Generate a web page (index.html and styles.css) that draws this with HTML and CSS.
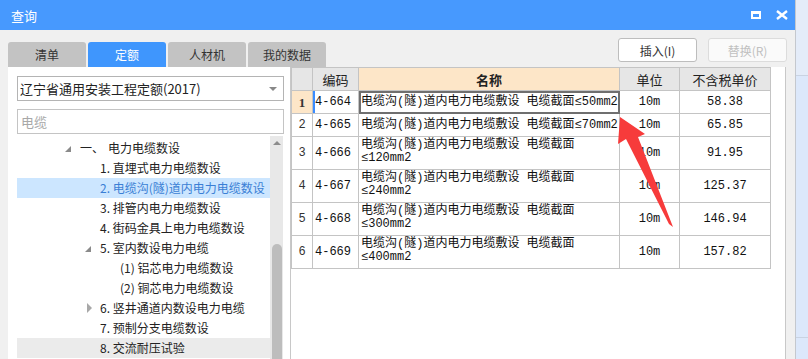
FILE: index.html
```html
<!DOCTYPE html>
<html lang="zh-CN">
<head>
    <meta charset="UTF-8">
    <title>查询</title>
    <link rel="stylesheet" href="styles.css">
</head>
<body>

    <div class="dialog">
        <div class="titlebar">
            <span class="title">查询</span>
            <span class="win-btn max"></span>
            <svg class="win-btn close" width="12" height="10" viewBox="0 0 12 10">
                <path d="M1 1 L11 9 M11 1 L1 9" stroke="#fff" stroke-width="2.4" />
            </svg>
        </div>

        <div class="toolbar">
            <div class="tabs">
                <div class="tab">清单</div>
                <div class="tab active">定额</div>
                <div class="tab">人材机</div>
                <div class="tab">我的数据</div>
            </div>
            <div class="actions">
                <button class="btn">插入(I)</button>
                <button class="btn" disabled>替换(R)</button>
            </div>
        </div>

        <div class="content">
            <div class="left-panel">
                <div class="select-box">
                    <span>辽宁省通用安装工程定额(2017)</span>
                    <span class="caret"></span>
                </div>
                <div class="search-box">电缆</div>

                <div class="tree-wrap">
                    <ul class="tree">
                        <li class="lv1"><span class="tg open"></span><span class="pre">一、</span>电力电缆数设</li>
                        <li class="lv2">1. 直埋式电力电缆数设</li>
                        <li class="lv2 selected">2. 电缆沟(隧)道内电力电缆数设</li>
                        <li class="lv2">3. 排管内电力电缆数设</li>
                        <li class="lv2">4. 街码金具上电力电缆数设</li>
                        <li class="lv2"><span class="tg open"></span>5. 室内数设电力电缆</li>
                        <li class="lv3">(1) 铝芯电力电缆数设</li>
                        <li class="lv3">(2) 铜芯电力电缆数设</li>
                        <li class="lv2"><span class="tg closed"></span>6. 竖井通道内数设电力电缆</li>
                        <li class="lv2">7. 预制分支电缆数设</li>
                        <li class="lv2 hover">8. 交流耐压试验</li>
                    </ul>
                    <div class="scrollbar">
                        <span class="up"></span>
                        <span class="thumb"></span>
                    </div>
                </div>
            </div>

            <div class="right-panel">
                <table class="grid">
                    <colgroup>
                        <col style="width:21px">
                        <col style="width:46px">
                        <col style="width:261px">
                        <col style="width:60px">
                        <col style="width:91px">
                    </colgroup>
                    <thead>
                        <tr>
                            <th></th>
                            <th>编码</th>
                            <th class="name-head">名称</th>
                            <th>单位</th>
                            <th>不含税单价</th>
                        </tr>
                    </thead>
                    <tbody>
                        <tr class="current">
                            <td class="num">1</td>
                            <td class="code">4-664</td>
                            <td class="name">电缆沟(隧)道内电力电缆敷设 电缆截面≤50mm2</td>
                            <td class="c">10m</td>
                            <td class="c">58.38</td>
                        </tr>
                        <tr>
                            <td class="num">2</td>
                            <td class="code">4-665</td>
                            <td class="name">电缆沟(隧)道内电力电缆敷设 电缆截面≤70mm2</td>
                            <td class="c">10m</td>
                            <td class="c">65.85</td>
                        </tr>
                        <tr class="two">
                            <td class="num">3</td>
                            <td class="code">4-666</td>
                            <td class="name">电缆沟(隧)道内电力电缆敷设 电缆截面≤120mm2</td>
                            <td class="c">10m</td>
                            <td class="c">91.95</td>
                        </tr>
                        <tr class="two">
                            <td class="num">4</td>
                            <td class="code">4-667</td>
                            <td class="name">电缆沟(隧)道内电力电缆敷设 电缆截面≤240mm2</td>
                            <td class="c">10m</td>
                            <td class="c">125.37</td>
                        </tr>
                        <tr class="two">
                            <td class="num">5</td>
                            <td class="code">4-668</td>
                            <td class="name">电缆沟(隧)道内电力电缆敷设 电缆截面≤300mm2</td>
                            <td class="c">10m</td>
                            <td class="c">146.94</td>
                        </tr>
                        <tr class="two">
                            <td class="num">6</td>
                            <td class="code">4-669</td>
                            <td class="name">电缆沟(隧)道内电力电缆敷设 电缆截面≤400mm2</td>
                            <td class="c">10m</td>
                            <td class="c">157.82</td>
                        </tr>
                    </tbody>
                </table>
            </div>
        </div>

        <!-- flecha roja de la captura -->
        <svg class="arrow" width="808" height="359" viewBox="0 0 808 359">
            <polygon points="620,117 645,134 638,137 673,227 669,224 626,139 618,144" fill="#f73b3b" />
        </svg>
    </div>

    <div class="backdrop">
        <div class="bd-top"></div>
        <div class="bd-mid"></div>
        <div class="bd-bottom"></div>
    </div>

</body>
</html>
```

FILE: styles.css
```css
body {
    margin: 0;
    width: 808px;
    height: 359px;
    overflow: hidden;
    display: flex;
    font-family: "Noto Sans CJK SC", "Noto Sans", sans-serif;
    font-size: 12px;
    color: #222;
    background-color: #dde8fa;
}

.dialog {
    width: 795px;
    height: 359px;
    background-color: #f0f0f0;
    border-right: 1px solid #c4c8ce;
    display: flex;
    flex-direction: column;
    flex-shrink: 0;
}

.titlebar {
    height: 30px;
    background-color: #4799fe;
    color: #fff;
    display: flex;
    align-items: center;
    padding-left: 11px;
    font-size: 13px;
}

.title {
    flex: 1;
}

.win-btn.max {
    width: 6px;
    height: 3px;
    border: 2px solid #fff;
    border-top-width: 3px;
    margin-right: 15px;
}

.win-btn.close {
    margin-right: 7px;
}

.toolbar {
    height: 37px;
    display: flex;
    justify-content: space-between;
}

.tabs {
    display: flex;
    align-items: flex-end;
    padding-left: 8px;
}

.tab {
    width: 78px;
    height: 25px;
    line-height: 25px;
    margin-right: 2px;
    text-align: center;
    background-color: #c3c3c3;
    color: #333;
    border-radius: 3px 3px 0 0;
}

.tab.active {
    background-color: #3f96fd;
    color: #fff;
}

.actions {
    display: flex;
    gap: 11px;
    padding-top: 8px;
    padding-right: 8px;
}

.btn {
    width: 79px;
    height: 24px;
    font-family: "Noto Sans CJK SC", sans-serif;
    font-size: 12px;
    color: #333;
    background-color: #fff;
    border: 1px solid #bdbdbd;
    border-radius: 3px;
    padding: 0;
}

.btn:disabled {
    color: #c0c0c0;
    border-color: #dcdcdc;
    background-color: #fafafa;
}

.content {
    flex: 1;
    display: flex;
    padding-left: 8px;
    padding-right: 8px;
    min-height: 0;
}

.left-panel {
    width: 273px;
    background-color: #fff;
    padding: 9px 0 0 9px;
    display: flex;
    flex-direction: column;
    border-right: 1px solid #c8c8c8;
}

.select-box {
    border: 1px solid #b4b4b4;
    display: flex;
    align-items: center;
    justify-content: space-between;
    padding: 0 6px 0 2px;
    box-sizing: border-box;
    width: 267px;
    height: 25px;
    font-size: 13px;
    color: #222;
}

.caret {
    width: 0;
    height: 0;
    border-left: 4px solid transparent;
    border-right: 4px solid transparent;
    border-top: 4px solid #888;
}

.search-box {
    margin-top: 8px;
    width: 267px;
    height: 25px;
    box-sizing: border-box;
    border: 1px solid #c4c4c4;
    padding-left: 3px;
    line-height: 23px;
    font-size: 13px;
    color: #a8a8a8;
}

.tree-wrap {
    flex: 1;
    display: flex;
    margin-top: 4px;
    min-height: 0;
}

.tree {
    list-style: none;
    margin: 0;
    padding: 0;
    width: 253px;
}

.tree li {
    height: 20px;
    line-height: 20px;
    white-space: nowrap;
    position: relative;
}

.tree .lv1 { padding-left: 63px; }
.tree .lv2 { padding-left: 83px; }
.tree .lv3 { padding-left: 103px; }

.tree li.selected {
    background-color: #cce6ff;
    color: #3a7fd5;
}

.tree li.hover {
    background-color: #ebebeb;
}

.tree .pre {
    margin-right: 4px;
}

.tg {
    position: absolute;
    top: 6px;
    width: 0;
    height: 0;
}

.lv1 .tg { left: 48px; }
.lv2 .tg { left: 68px; }

.tg.open {
    top: 8px;
    border-left: 6px solid transparent;
    border-bottom: 6px solid #8a8a8a;
}

.tg.closed {
    top: 5px;
    left: 70px;
    border-top: 5px solid transparent;
    border-bottom: 5px solid transparent;
    border-left: 5px solid #a8a8a8;
}

.scrollbar {
    width: 13px;
    background-color: #e8e8e8;
    position: relative;
    margin-top: -2px;
}

.scrollbar .up {
    position: absolute;
    top: 5px;
    left: 3px;
    border-left: 4px solid transparent;
    border-right: 4px solid transparent;
    border-bottom: 4px solid #8c8c8c;
}

.scrollbar .thumb {
    position: absolute;
    top: 108px;
    bottom: 0;
    left: 2px;
    width: 10px;
    border-radius: 5px 5px 0 0;
    background-color: #bdbdbd;
}

.right-panel {
    flex: 1;
    background-color: #fff;
    border-right: 1px solid #c8c8c8;
    margin-right: 1px;
}

.grid {
    border-collapse: collapse;
    table-layout: fixed;
    width: 480px;
    font-family: "Liberation Mono", "Noto Sans CJK SC", monospace;
    font-size: 12px;
}

.grid th,
.grid td {
    border: 1px solid #c4c4c4;
    padding: 0 2px;
    overflow: hidden;
}

.grid th {
    height: 22px;
    font-family: "Noto Sans CJK SC", sans-serif;
    font-weight: normal;
    font-size: 13px;
    color: #222;
    background-color: #e6e6e6;
}

.grid th.name-head {
    background-color: #fde6c8;
    font-weight: bold;
}

.grid tr {
    height: 23px;
}

.grid tr.two {
    height: 33px;
}

.grid td {
    line-height: 13px;
    color: #111;
}

.grid td.num {
    text-align: center;
    padding: 0;
    color: #333;
}

.grid td.code {
    padding-left: 2px;
}

.grid td.name {
    padding: 1px 1px 0 2px;
}

.grid tr.two td.name {
    vertical-align: top;
    padding-top: 2px;
}

.grid td.c {
    text-align: center;
}

.grid tr.current td.num {
    background-color: #fde6c8;
    font-family: "Liberation Serif", serif;
    font-weight: bold;
    font-size: 13px;
}

.grid tr.current td.code {
    box-shadow: inset 2px 0 0 #3b8cff;
}

.grid tr.current td.name {
    outline: 2px solid #6f6f6f;
    outline-offset: -2px;
}

.arrow {
    position: absolute;
    left: 0;
    top: 0;
    pointer-events: none;
}

.backdrop {
    flex: 1;
    display: flex;
    flex-direction: column;
}

.bd-top {
    height: 75px;
    background-color: #e4ecf9;
    border-bottom: 1px solid #c9d3e2;
}

.bd-mid {
    height: 261px;
    background-color: #dce8fb;
    border-bottom: 1px solid #c9d3e2;
}

.bd-bottom {
    flex: 1;
    background-color: #dce8fb;
}
```
